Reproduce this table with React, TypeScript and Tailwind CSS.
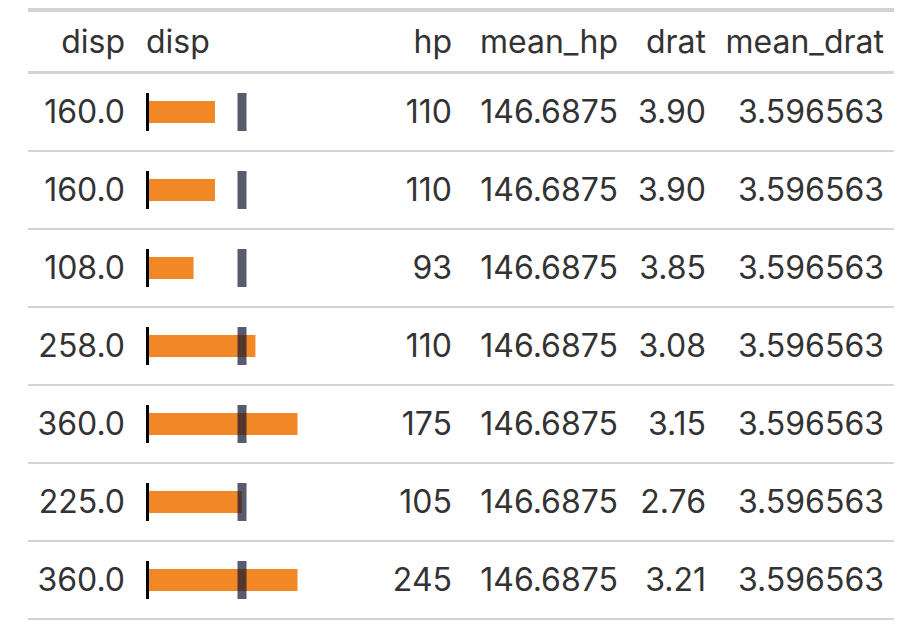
const rows = [
  { disp: 160, hp: 110, drat: '3.90' },
  { disp: 160, hp: 110, drat: '3.90' },
  { disp: 108, hp: 93, drat: '3.85' },
  { disp: 258, hp: 110, drat: '3.08' },
  { disp: 360, hp: 175, drat: '3.15' },
  { disp: 225, hp: 105, drat: '2.76' },
  { disp: 360, hp: 245, drat: '3.21' },
];

const scale = 0.4125;

const Bar = ({ value }: { value: number }) => (
  <svg width="170" height="38" viewBox="0 0 170 38">
    <rect x="3" y="8" width={value * scale} height="22" fill="#f28825" />
    <rect x="0" y="0" width="3" height="38" fill="#000" />
    {/* mean of disp */}
    <rect x="91.5" y="0" width="9" height="38" fill="#0f1530" fillOpacity="0.7" />
  </svg>
);

const cols = 'grid grid-cols-[107px_200px_127px_166px_88px_178px]';

export default function App() {
  return (
    <div className="bg-white w-[898px] h-[632px] pt-2 pl-[28px]" style={{ fontFamily: 'Inter, "Noto Sans", sans-serif' }}>
      <div className="w-[866px] text-[32px] text-[#333333]">
        <div className={`${cols} border-t-4 border-b-[3px] border-[#d3d3d3] h-[66px] items-center`}>
          <div className="text-right pr-[10px]">disp</div>
          <div className="pl-[11px]">disp</div>
          <div className="text-right pr-[10px]">hp</div>
          <div className="text-right pr-[10px]">mean_hp</div>
          <div className="text-right pr-[10px]">drat</div>
          <div className="text-right pr-[10px]">mean_drat</div>
        </div>
        {rows.map((r, i) => (
          <div key={i} className={`${cols} border-b-2 border-[#d3d3d3] h-[78px] items-center`}>
            <div className="text-right pr-[10px]">{r.disp.toFixed(1)}</div>
            <div className="pl-[11px] flex items-center">
              <Bar value={r.disp} />
            </div>
            <div className="text-right pr-[10px]">{r.hp}</div>
            <div className="text-right pr-[10px]">146.6875</div>
            <div className="text-right pr-[10px]">{r.drat}</div>
            <div className="text-right pr-[10px]">3.596563</div>
          </div>
        ))}
      </div>
    </div>
  );
}
